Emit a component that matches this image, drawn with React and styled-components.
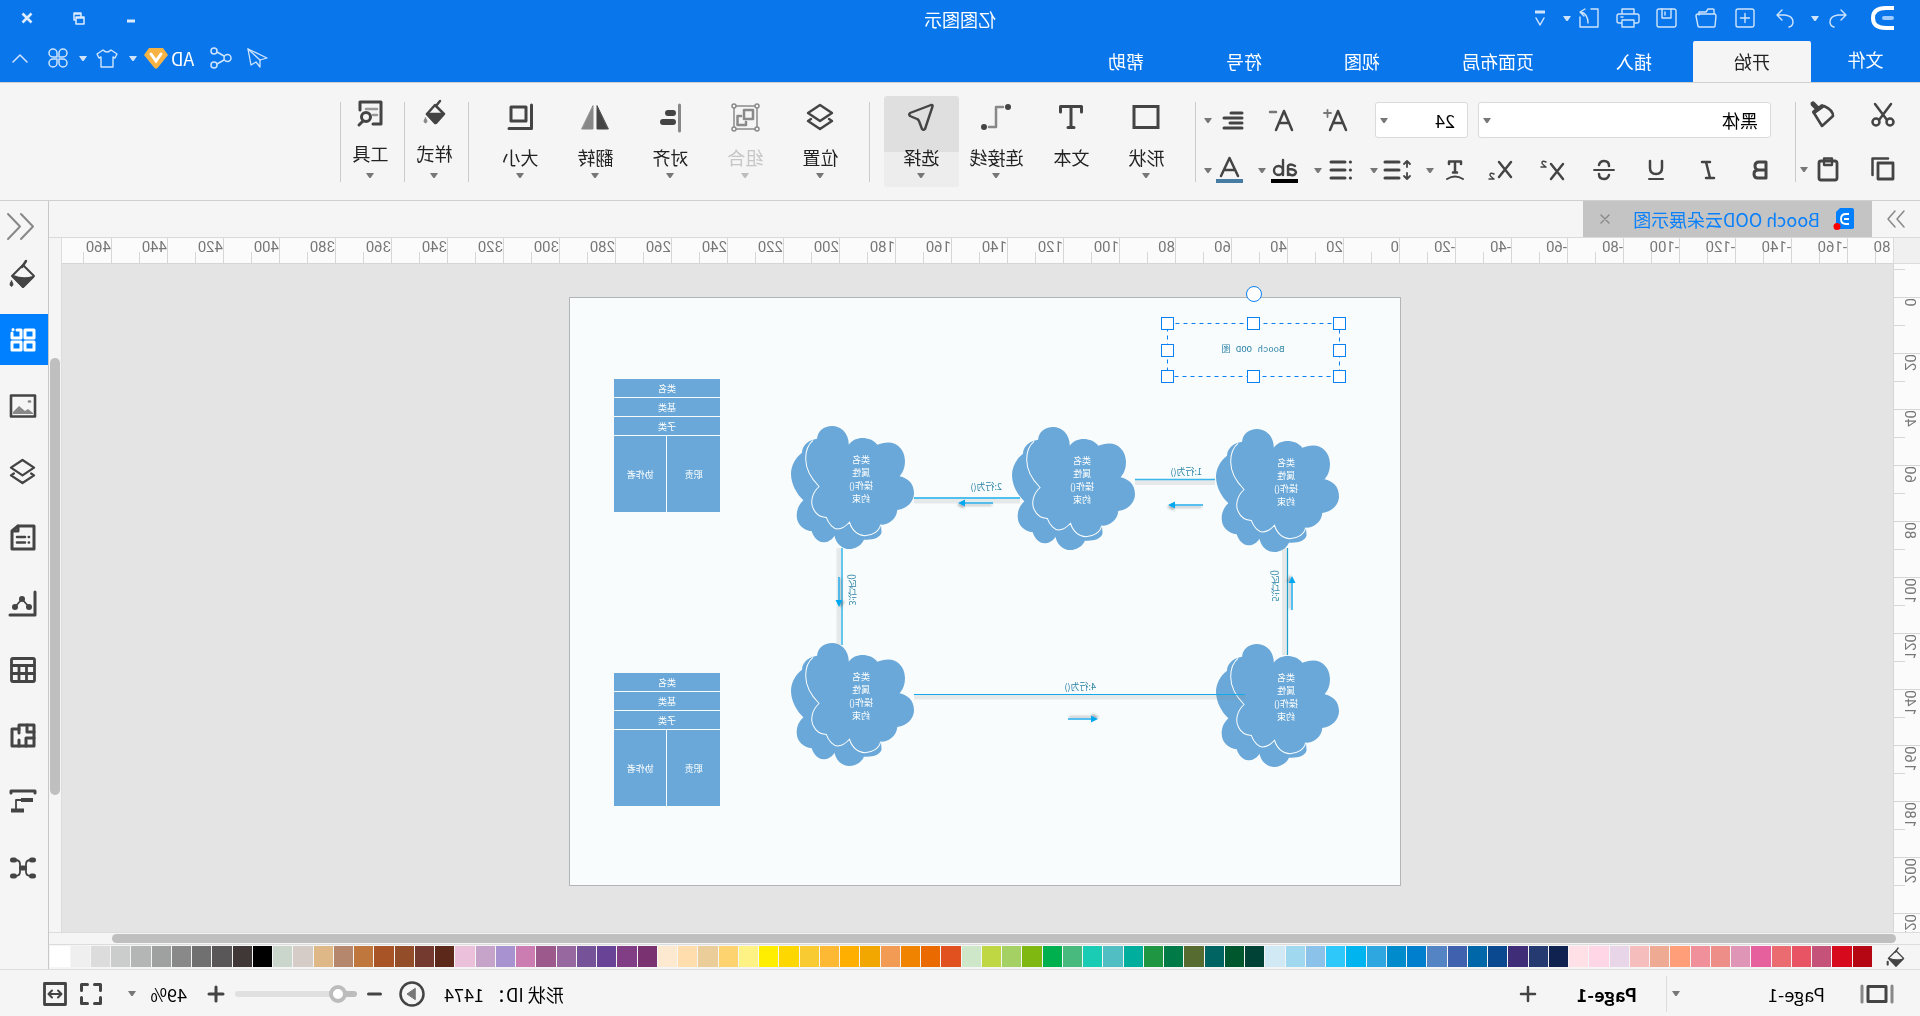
import React, { useState } from 'react';
import styled, { createGlobalStyle, css } from 'styled-components';

const FONT = '"Noto Sans CJK SC", "Noto Sans", sans-serif';
const RULER_FONT = 'Roboto, "Noto Sans", sans-serif';
const INK = '#444444';
const SHAPE = '#69a8d8';
const LINE = '#12aaec';

const GlobalStyle = createGlobalStyle`
  * { box-sizing: border-box; }
  html, body { margin: 0; padding: 0; background: #f5f5f5; }
  button, select, input { font: inherit; color: inherit; }
`;

const Shell = styled.div`
  transform: scaleX(-1);
  display: flex;
  flex-direction: column;
  height: 100vh;
  overflow: hidden;
  background: #f5f5f5;
  color: #111;
  font-family: ${FONT};
  font-size: 18px;
  font-weight: 400;
  line-height: 24px;
`;

const bare = css`
  appearance: none;
  border: 0;
  margin: 0;
  padding: 0;
  background: transparent;
  cursor: pointer;
`;

const Cell = styled.button`
  ${bare}
  display: flex;
  flex: none;
  align-items: center;
  justify-content: center;
  width: ${(p) => p.$w}px;
  height: ${(p) => p.$h || 36}px;
`;

const Svg = styled.svg`
  display: block;
  flex: none;
  overflow: visible;
`;

function Icon({ w = 24, h = w, vw = w, vh = h, sw = 2, children }) {
  return (
    <Svg
      width={w}
      height={h}
      viewBox={`0 0 ${vw} ${vh}`}
      fill="none"
      stroke="currentColor"
      strokeWidth={sw}
      strokeLinecap="round"
      strokeLinejoin="round"
      aria-hidden="true"
    >
      {children}
    </Svg>
  );
}

function Caret() {
  return (
    <Svg width="8" height="5" viewBox="0 0 8 5" fill="currentColor" aria-hidden="true">
      <path d="M0 0h8L5 4.500Q4 5.500 3 4.500Z" />
    </Svg>
  );
}

/* ---------- header ---------- */

const Header = styled.header`
  flex: none;
  background: #0977eb;
  color: #fff;
  border-bottom: 1px solid #cfcfcf;
`;

const TitleRow = styled.div`
  display: grid;
  grid-template-columns: 1fr auto 1fr;
  height: 36px;
  align-items: center;
`;

const QuickBar = styled.div`
  display: flex;
  align-items: center;
  padding-left: 25px;
  color: #cfe4fc;
`;

const Logo = styled.div`
  margin-right: 16px;
  color: #fff;
`;

const AppTitle = styled.h1`
  margin: 0;
  padding-top: 2px;
  font-size: 18px;
  font-weight: 400;
`;

const WindowButtons = styled.div`
  display: flex;
  justify-content: flex-end;
  padding-right: 1px;
  color: #dcebfd;
`;

const MenuRow = styled.div`
  display: flex;
  height: 46px;
  align-items: flex-end;
`;

const FileTab = styled.button`
  ${bare}
  width: 109px;
  height: 46px;
`;

const MenuTab = styled.button`
  ${bare}
  height: 41px;
  padding: 0 41px 1px;
  border-radius: 2px 2px 0 0;
  background: ${(p) => (p.$active ? '#f5f5f5' : 'transparent')};
  color: ${(p) => (p.$active ? '#222' : '#fff')};
`;

const MenuTools = styled.div`
  display: flex;
  align-self: flex-start;
  align-items: center;
  height: 44px;
  margin-left: auto;
  color: #cfe4fc;
`;

const Vip = styled.button`
  ${bare}
  display: flex;
  align-items: center;
  justify-content: flex-end;
  gap: 3px;
  width: 60px;
  padding-right: 2px;
  color: #fff;
`;

/* ---------- ribbon ---------- */

const Ribbon = styled.div`
  display: flex;
  flex: none;
  height: 118px;
  border-bottom: 1px solid #cfcfcf;
  color: ${INK};
`;

const Rule = styled.div`
  flex: none;
  width: 1px;
  height: 80px;
  margin-top: 19px;
  background: #cbcbcb;
`;

const ClipGroup = styled.div`
  display: grid;
  grid-template-columns: 74px 50px;
  grid-auto-rows: 54px;
  padding-top: 5px;
  align-items: center;
`;

const Pair = styled.div`
  display: flex;
  align-items: center;
  margin-right: ${(p) => p.$gap || 0}px;
  color: #777;
  & > :first-child { color: ${(p) => (p.$plain ? '#777' : INK)}; }
`;

const FontGroup = styled.div`
  display: flex;
  flex-direction: column;
  gap: 14px;
  width: 599px;
  padding: 19px 0 0 9px;
`;

const FontRow = styled.div`
  display: flex;
  align-items: center;
  height: 36px;
  padding-left: ${(p) => p.$pad || 0}px;
`;

const PickerWrap = styled.div`
  display: grid;
  align-items: center;
  width: ${(p) => p.$w}px;
  height: ${(p) => p.$h || 36}px;
  margin-right: ${(p) => p.$gap || 0}px;
  & > * { grid-area: 1 / 1; }
  & > svg { justify-self: end; margin-right: 5px; color: #777; pointer-events: none; }
`;

const Picker = styled.select`
  ${bare}
  width: 100%;
  height: 100%;
  padding: 0 20px 0 ${(p) => (p.$plain ? 32 : 12)}px;
  color: #000;
  background: ${(p) => (p.$plain ? 'transparent' : '#fff')};
  border: ${(p) => (p.$plain ? '0' : '1px solid #dadada')};
  border-radius: 3px;
`;

const ToolGroup = styled.div`
  display: flex;
  padding: 13px ${(p) => (p.$tight ? '0' : '14px')} 0 ${(p) => (p.$tight ? '0' : '11px')};
`;

const Tool = styled.button`
  ${bare}
  display: flex;
  flex-direction: column;
  align-items: center;
  justify-content: flex-start;
  width: ${(p) => (p.$small ? 63 : 75)}px;
  height: 91px;
  padding: ${(p) => (p.$small ? '3px 0 0 4px' : '7px 0 0')};
  border-radius: 3px;
  color: ${(p) => (p.$off ? '#8a8a8a' : INK)};
  background: ${(p) => (p.$on ? 'linear-gradient(#dfdfdf 56px, #ededed 56px)' : 'transparent')};
`;

const ToolIcon = styled.span`
  display: flex;
  align-items: center;
  justify-content: center;
  height: 28px;
`;

const ToolLabel = styled.span`
  margin: 14px 0 ${(p) => (p.$small ? 8 : 4)}px;
  white-space: nowrap;
  color: ${(p) => (p.$off ? '#c6c6c6' : '#222')};
`;

const ToolCaret = styled.span`
  color: ${(p) => (p.$off ? '#bdbdbd' : '#777')};
`;

/* ---------- workspace ---------- */

const Workspace = styled.div`
  display: flex;
  flex: 1;
  min-height: 0;
`;

const Editor = styled.main`
  display: flex;
  flex: 1;
  flex-direction: column;
  min-width: 0;
`;

const DocBar = styled.div`
  display: flex;
  flex: none;
  height: 37px;
  border-bottom: 1px solid #dadada;
  color: #888;
`;

const DocTab = styled.div`
  display: flex;
  align-items: center;
  width: 289px;
  padding-left: 18px;
  background: #c4c4c4;
`;

const DocName = styled.span`
  flex: 1;
  padding-left: 14px;
  color: #0a80fa;
  white-space: nowrap;
`;

const Board = styled.div`
  display: grid;
  flex: 1;
  grid-template-columns: 27px minmax(0, 1fr) 13px;
  grid-template-rows: 26px minmax(0, 1fr) 13px;
  min-height: 0;
`;

const Corner = styled.div`
  background: #f0f0f0;
  border-right: 1px solid #dcdcdc;
  border-bottom: 1px solid #dcdcdc;
`;

const TopRuler = styled.div`
  display: flex;
  overflow: hidden;
  background: #fbfbfb;
  border-bottom: 1px solid #d6d6d6;
  color: #777;
  font-family: ${RULER_FONT};
  font-size: 15px;
  line-height: 18px;
  & > :first-child { margin-left: -11px; }
`;

const TopMark = styled.span`
  position: relative;
  flex: none;
  width: 56px;
  border-left: 1px solid #d6d6d6;
  &::after {
    content: '';
    position: absolute;
    left: 27px;
    bottom: 0;
    width: 1px;
    height: 11px;
    background: #d6d6d6;
  }
`;

const SideRuler = styled.div`
  display: flex;
  flex-direction: column;
  overflow: hidden;
  background: #fbfbfb;
  border-right: 1px solid #d6d6d6;
  color: #777;
  font-family: ${RULER_FONT};
  font-size: 15px;
  line-height: 18px;
  & > :first-child { margin-top: -23px; }
`;

const SideMark = styled.span`
  position: relative;
  display: flex;
  flex: none;
  align-items: flex-start;
  height: 56px;
  padding-left: 1px;
  border-top: 1px solid #d6d6d6;
  &::after {
    content: '';
    position: absolute;
    right: 0;
    top: 27px;
    width: 11px;
    height: 1px;
    background: #d6d6d6;
  }
`;

const SideText = styled.span`
  writing-mode: vertical-rl;
  transform: rotate(180deg);
`;

const Canvas = styled.div`
  position: relative;
  overflow: hidden;
  background: #e4e4e4;
`;

const VScroll = styled.div`
  grid-row: 1 / 3;
  grid-column: 3;
  display: flex;
  border-left: 1px solid #dcdcdc;
`;

const VThumb = styled.div`
  flex: 1;
  margin: 120px 1px 137px;
  border-radius: 5px;
  background: #bfbfbf;
`;

const HScroll = styled.div`
  grid-column: 1 / -1;
  display: flex;
  border: solid #dcdcdc;
  border-width: 1px 0;
`;

const HThumb = styled.div`
  flex: 1;
  margin: 1px 63px 1px 24px;
  border-radius: 5px;
  background: #bfbfbf;
`;

const Swatches = styled.div`
  display: flex;
  flex: none;
  height: 24px;
  padding: 1px 1px 2px 0;
  color: ${INK};
`;

const SwatchList = styled.div`
  display: flex;
  flex: 1;
  gap: 1px;
`;

const Swatch = styled.button`
  ${bare}
  flex: 1;
  background: ${(p) => p.$c};
`;

const SidePanel = styled.nav`
  display: flex;
  flex: none;
  flex-direction: column;
  width: 49px;
  border-left: 1px solid #c8c8c8;
  color: ${INK};
`;

const SideList = styled.div`
  display: flex;
  flex-direction: column;
  gap: 15px;
  margin-top: 17px;
`;

const SideItem = styled.button`
  ${bare}
  display: flex;
  align-items: center;
  justify-content: center;
  height: ${(p) => p.$h || 51}px;
  padding-left: ${(p) => (p.$wide ? 6 : 2)}px;
  color: ${(p) => (p.$on ? '#fff' : INK)};
  background: ${(p) => (p.$on ? '#0080ff' : 'transparent')};
`;

/* ---------- page and diagram ---------- */

const Page = styled.div`
  position: absolute;
  left: 492px;
  top: 33px;
  width: 832px;
  height: 589px;
  background: #f8fcfd;
  border: 1px solid #b2b6b6;
  font-size: 9px;
  line-height: 13px;
  color: #2b83a6;
`;

const Links = styled.svg`
  position: absolute;
  left: 0;
  top: 0;
  overflow: visible;
`;

const CloudNode = styled.div`
  position: absolute;
  left: ${(p) => p.$x}px;
  top: ${(p) => p.$y}px;
  width: 123px;
  height: 123px;
`;

const CloudArt = styled.svg`
  position: absolute;
  inset: 0;
`;

const CloudText = styled.div`
  position: relative;
  width: 106px;
  padding-top: 27px;
  text-align: center;
  color: #fff;
`;

const ClassTable = styled.table`
  position: absolute;
  left: ${(p) => p.$x}px;
  top: ${(p) => p.$y}px;
  width: 108px;
  border-collapse: separate;
  border-spacing: 1px;
  table-layout: fixed;
  color: #fff;
  text-align: center;
`;

const ClassCell = styled.td`
  height: ${(p) => (p.$tall ? 76 : 18)}px;
  padding: 0;
  background: ${SHAPE};
`;

const LinkLabel = styled.span`
  position: absolute;
  left: ${(p) => p.$x}px;
  top: ${(p) => p.$y}px;
  white-space: nowrap;
  ${(p) => p.$up && css`
    writing-mode: vertical-rl;
    transform: rotate(180deg);
  `}
`;

const Selected = styled.div`
  position: absolute;
  left: 60px;
  top: 25px;
  width: 174px;
  height: 54px;
  display: flex;
  align-items: center;
  justify-content: center;
  font-family: "Liberation Mono", "Noto Sans CJK SC", monospace;
`;

const SelectionArt = styled.svg`
  position: absolute;
  inset: 0;
  overflow: visible;
`;

/* ---------- status bar ---------- */

const StatusBar = styled.footer`
  display: flex;
  flex: none;
  align-items: center;
  height: 47px;
  padding: 1px 37px 0 23px;
  border-top: 1px solid #dcdcdc;
  color: #000;
`;

const StatusRule = styled.div`
  width: 1px;
  height: 36px;
  background: #dcdcdc;
`;

const PageTab = styled.button`
  ${bare}
  padding: 0 28px 0 29px;
  font-weight: 700;
`;

const ShapeId = styled.span`
  margin-left: auto;
  margin-right: 13px;
`;

const Dim = styled.span`
  display: flex;
  color: ${INK};
`;

const Zoom = styled.input`
  appearance: none;
  width: 122px;
  height: 18px;
  margin: 0;
  background: transparent;
  &::-webkit-slider-runnable-track {
    height: 6px;
    border-radius: 3px;
    background: linear-gradient(to right, #bcbcbc 20px, #e0e0e0 20px);
  }
  &::-webkit-slider-thumb {
    appearance: none;
    width: 18px;
    height: 18px;
    margin-top: -6px;
    border: 4px solid #bcbcbc;
    border-radius: 50%;
    background: #fff;
  }
`;

const ZoomValue = styled.span`
  width: 44px;
  margin-left: 10px;
`;

/* ---------- data ---------- */

const MENUS = ['开始', '插入', '页面布局', '视图', '符号', '帮助'];

const COLORS = (
  'b50614 d60a1c c55278 e95464 ea6c70 e6609e df96b6 ee8e88 f0909a ff9e78 efaa94 f5bdbb e8d5e8 ffd6e6 ffe0e6 ' +
  '102250 243a70 402d78 0a4890 0068a8 4062ae 5584c4 007fcf 008bcd 2ea7e0 00b4f0 2ec8fa 8ac2ea a0d8ef d0e9f5 ' +
  '004236 00572e 006463 556b2f 007a46 1e9642 00ae9e 50bec2 1accb4 48ba7e 00b04f 80b812 a4d064 bed743 cfe7c9 ' +
  'e1501f eb6a00 f08300 f29b55 f2a700 ffaf00 fdb933 f9cb33 fed700 ffee00 fdf283 fdd370 ebcd99 ffddac fde9d0 7a3270 ' +
  '823e84 694396 765398 96689f 9c5a8c cb7cb0 a892d0 c6a4ca ebc0da 5b2819 753a2f 934d29 a85427 c0773e b5876c ' +
  'deb887 d5ccc8 cad5cc 000000 3f3837 595757 707070 898989 9fa0a0 b4b5b5 cbcdcc dcdcdc efefef ffffff'
).split(' ');

const TOP_MARKS = Array.from({ length: 33 }, (_, i) => -180 + i * 20);
const SIDE_MARKS = ['', 0, 20, 40, 60, 80, 100, 120, 140, 160, 180, 200, 220];

const CLOUDS = [[61, 131], [265, 129], [486, 128], [61, 346], [486, 345]];

/* ---------- drawings ---------- */

const bucket = (
  <Icon w={26} h={28} sw={2}>
    <path d="M10 1l4 6" strokeWidth="2.500" />
    <path d="M13 5L2 16l11 11 11-11Z" />
    <path d="M3 17q10 3 20-1L13 27Z" fill="currentColor" />
    <path d="M24.500 21q3 4 0 5.500q-3-1.500 0-5.500Z" fill="currentColor" strokeWidth="1" />
  </Icon>
);

const layers = (w, h) => (
  <Icon w={w} h={h} vw={26} vh={26} sw={2.400}>
    <path d="M13 1l12 8-12 8L1 9Z" />
    <path d="M4 15l-3 2 12 8 12-8-3-2" />
  </Icon>
);

const toolsA = [
  ['形状', <Icon w={28} h={24} sw={3}><path d="M2 1.500h24v21H2Z" strokeLinejoin="miter" /></Icon>, true],
  ['文本', <Icon w={24} h={24} sw={3}><path d="M1.500 7V1.500h21V7M12 2v20M9 22.500h6" /></Icon>, false],
  ['连接线', (
    <Icon w={30} h={24} sw={2.500}>
      <g stroke="#888"><path d="M8 2h7v20h7" /></g>
      <g fill="currentColor" stroke="none"><circle cx="3" cy="2" r="3" /><circle cx="27" cy="22" r="3" /></g>
    </Icon>
  ), true],
  ['选择', (
    <Icon w={26} h={27} sw={2.400}>
      <path d="M1.500 2.500Q1 .500 3 1l21 8q1.500 1.500 0 3l-7 3q-1.500.500-2 2l-3 8q-1.500 1.500-3 0Z" />
    </Icon>
  ), true],
];

const toolsB = [
  ['位置', layers(26, 26), true],
  ['组合', (
    <Icon w={29} h={29} sw={1.500}>
      <path d="M3 3h23v23H3Z" />
      <g strokeWidth="2.500"><path d="M7 7h9v9H7Z" /><path d="M19 13h3.500v9H14v-3" /></g>
      <g fill="#f5f5f5"><circle cx="3" cy="3" r="2" /><circle cx="26" cy="3" r="2" /><circle cx="3" cy="26" r="2" /><circle cx="26" cy="26" r="2" /></g>
    </Icon>
  ), true, true],
  ['对齐', (
    <Icon w={22} h={27} sw={6}>
      <path d="M1.500 1v26" stroke="#888" strokeWidth="3" />
      <path d="M8 9h5M8 18h10" />
    </Icon>
  ), true],
  ['翻转', (
    <Icon w={28} h={25} sw={1}>
      <path d="M12 1v23H1Z" fill="currentColor" />
      <path d="M16 1v23h11Z" fill="#888" stroke="#888" />
    </Icon>
  ), true],
  ['大小', (
    <Icon w={26} h={26} sw={3}>
      <path d="M7 3h15v14H7Z" /><path d="M1.500 1v23.500H24" />
    </Icon>
  ), true],
];

const toolsC = [
  ['样式', (
    <Icon w={24} h={26} sw={2.500}>
      <path d="M6 1l4 5" />
      <path d="M11 5L2 14l8 9 9-9Z" />
      <path d="M3 14h16l-8 9Z" fill="currentColor" />
      <path d="M20.500 18q3 4 0 5q-3-1 0-5Z" fill="#888" stroke="#888" strokeWidth="1" />
    </Icon>
  )],
  ['工具', (
    <Icon w={26} h={26} sw={3}>
      <path d="M23 10V2H2v22h8" />
      <path d="M6 9h11M6 15h4" stroke="#999" strokeWidth="2.500" />
      <circle cx="17" cy="17" r="4.500" /><path d="M20 21l4 4" />
    </Icon>
  )],
];

const sideIcons = [
  ['形状库', (
    <Icon w={26} h={26} sw={3}>
      <path d="M2 3h9v8H2ZM2 15h9v8H2ZM15 15h9v8h-9ZM15 3v8h9V6M15 3h4M23 2.500v.200" />
    </Icon>
  )],
  ['图片', (
    <Icon w={28} h={24} sw={2.600}>
      <path d="M2 1.500h24v21H2Z" />
      <path d="M4 19l5-4 3 2 6-5 6 6v2H4Z" fill="#888" stroke="none" />
      <path d="M7 7.500h1" stroke="#888" />
    </Icon>
  )],
  ['图层', layers(27, 25)],
  ['文档', (
    <Icon w={26} h={27} sw={3}>
      <path d="M2 2h16l6 5v18H2Z" /><path d="M18 2v5h5" />
      <path d="M11 13h8M11 18.500h8M7 13h.200M7 18.500h.200" strokeWidth="2.600" />
    </Icon>
  )],
  ['图表', (
    <Icon w={28} h={26} sw={3}>
      <path d="M2 1v23h25" />
      <path d="M8 16l7-8 7 8" strokeWidth="1.800" />
      <g fill="currentColor" stroke="none"><circle cx="8" cy="16" r="3" /><circle cx="15" cy="8" r="3" /><circle cx="22" cy="16" r="3" /></g>
    </Icon>
  )],
  ['表格', (
    <Icon w={26} h={26} sw={2.800}>
      <rect x="1.500" y="1.500" width="23" height="23" rx="1.500" />
      <path d="M2 8.500h22M2 16.500h22M9.500 9v15M17 9v15" />
    </Icon>
  )],
  ['平面图', (
    <Icon w={26} h={25} sw={3}>
      <path d="M2 2h15v4h7v17H2Z" /><path d="M9 2v7H2M17 6v4M2 15h8v8M17 17v6" />
    </Icon>
  )],
  ['甘特图', (
    <Icon w={28} h={25} sw={3}>
      <path d="M2 4V2h24v2" />
      <path d="M14 11h7v9" strokeWidth="1.800" />
      <path d="M4 11h12M13 21.500h13" strokeWidth="4" strokeLinecap="butt" />
    </Icon>
  )],
  ['思维导图', (
    <Icon w={28} h={24} sw={5}>
      <path d="M3.500 4h2M3.500 20h2M22.500 4h2M22.500 20h2M12.500 12h3" />
      <path d="M6 4q5 0 5 4v8q0 4-5 4M22 4q-5 0-5 4v8q0 4 5 4M11 12h6" strokeWidth="1.800" />
    </Icon>
  )],
];

function ToolButton({ label, icon, caret, off, on, small }) {
  return (
    <Tool type="button" $off={off} $on={on} $small={small} disabled={off}>
      <ToolIcon>{icon}</ToolIcon>
      <ToolLabel $off={off} $small={small}>{label}</ToolLabel>
      {caret && <ToolCaret $off={off}><Caret /></ToolCaret>}
    </Tool>
  );
}

function CaretButton({ label, w = 12 }) {
  return <Cell $w={w} type="button" aria-label={label}><Caret /></Cell>;
}

function Cloud({ x, y }) {
  return (
    <CloudNode $x={x} $y={y}>
      <CloudArt width="123" height="123" viewBox="0 0 368 368" fill={SHAPE} aria-hidden="true">
        <path d="M290 38C325 44 335 65 335 80C355 95 368 120 368 143C368 175 350 205 331 222C345 235 351 250 351 268C351 295 330 313 306 315C300 335 285 348 272 348C258 348 245 340 238 328C232 355 212 368 194 368C175 368 155 355 150 340C125 342 100 335 97 318L99 295L190 150Z" />
        <path d="M195 56C195 20 220 0 245 0C270 0 288 15 290 38C312 48 324 72 324 98C324 135 300 165 284 181C305 200 312 230 300 250C292 268 275 273 262 274C255 295 240 308 229 308C215 308 202 298 193 288C185 315 165 328 147 328C125 328 103 315 100 295C80 297 52 280 50 251C20 248 0 225 0 201C0 170 20 155 43 150C30 135 27 120 27 103C28 70 50 49 77 49C90 49 100 52 110 56C120 42 138 36 154 36C170 36 185 42 195 56Z" />
        <path d="M302 43C317 55 324 75 324 98C324 135 300 165 284 181C305 200 312 230 300 250C292 268 275 273 262 274C255 295 240 308 229 308C215 308 202 298 193 288C185 315 165 328 147 328C125 328 103 315 100 295" fill="none" stroke="#fff" strokeWidth="3" />
      </CloudArt>
      <CloudText>类名<br />属性<br />操作()<br />约束</CloudText>
    </CloudNode>
  );
}

function ClassBox({ x, y }) {
  return (
    <ClassTable $x={x} $y={y}>
      <tbody>
        <tr><ClassCell colSpan={2}>类名</ClassCell></tr>
        <tr><ClassCell colSpan={2}>基类</ClassCell></tr>
        <tr><ClassCell colSpan={2}>子类</ClassCell></tr>
        <tr><ClassCell $tall>职责</ClassCell><ClassCell $tall>协作者</ClassCell></tr>
      </tbody>
    </ClassTable>
  );
}

function Arrow({ x, y, angle, len }) {
  return (
    <g transform={`translate(${x} ${y}) rotate(${angle})`} filter="url(#soft)">
      <path d={`M0 0H${len - 6}`} stroke={LINE} strokeWidth="1.400" />
      <path d={`M${len - 7} -3.500L${len} 0L${len - 7} 3.500Z`} fill="#00a8f0" />
    </g>
  );
}

function Diagram() {
  const xs = [0, 86, 172];
  const ys = [0, 27, 53];
  return (
    <Page>
      {CLOUDS.map(([x, y]) => <Cloud key={`${x}-${y}`} x={x} y={y} />)}
      <ClassBox x={679} y={80} />
      <ClassBox x={679} y={374} />
      <Links width="830" height="587" fill="none" aria-hidden="true">
        <defs>
          <filter id="soft" x="-50%" y="-200%" width="200%" height="500%" filterUnits="objectBoundingBox">
            <feDropShadow dx="1" dy="2" stdDeviation="1.200" floodColor="#555" floodOpacity="0.450" />
          </filter>
        </defs>
        <g stroke="#8a8a8a" strokeOpacity="0.160" strokeWidth="5">
          <path d="M185 184.500H265M380 203H486M155 399H486M115.500 250V357M561 250V347" />
        </g>
        <path d="M185 181.500H265" stroke="#3ab6ec" strokeWidth="1.500" />
        <path d="M380 200H486" stroke="#52c0ee" strokeWidth="2" />
        <path d="M155 396.500H486" stroke={LINE} strokeWidth="1.200" />
        <path d="M112.500 250V357" stroke="#1a9fce" strokeWidth="1.200" />
        <path d="M558 250V347" stroke="#62c6f0" strokeWidth="2" />
        <Arrow x={197} y={207} angle={0} len={35} />
        <Arrow x={407} y={205} angle={0} len={35} />
        <Arrow x={332} y={421} angle={180} len={30} />
        <Arrow x={108} y={312} angle={-90} len={34} />
        <Arrow x={561} y={279} angle={90} len={30} />
      </Links>
      <LinkLabel $x={198} $y={167}>1:行为()</LinkLabel>
      <LinkLabel $x={398} $y={182}>2:行为()</LinkLabel>
      <LinkLabel $x={304} $y={382}>4:行为()</LinkLabel>
      <LinkLabel $x={541} $y={276} $up>3:行为()</LinkLabel>
      <LinkLabel $x={118} $y={272} $up>5:行为()</LinkLabel>
      <Selected>
        <SelectionArt width="174" height="54" fill="none" stroke="#0a80f5" aria-hidden="true">
          <rect x="0.500" y="0.500" width="172" height="53" strokeDasharray="4 4" />
          {ys.map((y) => xs.map((x) => (
            (x !== 86 || y !== 27) && <rect key={`${x}-${y}`} x={x - 5.5} y={y - 5.5} width="12" height="12" fill="#fff" />
          )))}
          <circle cx="86" cy="-29" r="7.500" fill="#fff" />
        </SelectionArt>
        <span>Booch OOD 图</span>
      </Selected>
    </Page>
  );
}

export default function App() {
  const [zoom, setZoom] = useState(10);
  const [font, setFont] = useState('黑体');
  const [size, setSize] = useState('24');
  return (
    <>
      <GlobalStyle />
      <Shell>
        <Header>
          <TitleRow>
            <QuickBar>
              <Logo>
                <Icon w={24} h={24} sw={4}>
                  <path d="M1 2h8q13 0 13 10t-13 10H1" strokeLinecap="butt" />
                  <path d="M3 12h8" stroke="#9ccaff" />
                </Icon>
              </Logo>
              <Cell $w={34} type="button" aria-label="撤销">
                <Icon w={18} h={19} sw={1.400}><path d="M6 1L1 6l5 5M1 6h8q8 1 8 7 0 4-4 5" /></Icon>
              </Cell>
              <CaretButton label="撤销列表" />
              <Cell $w={48} type="button" aria-label="重做">
                <Icon w={18} h={19} sw={1.400}><path d="M12 1l5 5-5 5M17 6H9Q1 7 1 13q0 4 4 5" /></Icon>
              </Cell>
              <Cell $w={32} type="button" aria-label="新建">
                <Icon w={20} h={20} sw={1.400}><rect x="1" y="1" width="18" height="18" rx="2" /><path d="M10 5.500v9M5.500 10h9" /></Icon>
              </Cell>
              <Cell $w={46} type="button" aria-label="打开">
                <Icon w={22} h={20} sw={1.400}><path d="M3 6V2q0-1 1-1h5l2 3h7v3M2 6h17q2 0 2 2l-2 10q0 1-1 1H3q-1 0-1-1L1 8q0-1 1-2Z" /></Icon>
              </Cell>
              <Cell $w={32} type="button" aria-label="保存">
                <Icon w={21} h={20} sw={1.400}><rect x="1" y="1" width="19" height="18" rx="2" /><path d="M6 1v9h9V1M12 4v3" /></Icon>
              </Cell>
              <Cell $w={46} type="button" aria-label="打印">
                <Icon w={24} h={20} sw={1.400}><path d="M6 6V1h12v5M5 15H3q-2 0-2-2V8q0-2 2-2h18q2 0 2 2v5q0 2-2 2h-2M6 12h12v7H6ZM17 9h2" /></Icon>
              </Cell>
              <Cell $w={32} type="button" aria-label="导出">
                <Icon w={20} h={20} sw={1.400}><path d="M8 1H1v18h18V9M14 1l5 3-4 4M18 4q-7 2-7 11" /></Icon>
              </Cell>
              <CaretButton label="导出列表" />
              <Cell $w={42} type="button" aria-label="自定义工具栏">
                <Icon w={12} h={16} sw={1.500}><path d="M1 2h10" strokeWidth="3" strokeLinecap="butt" /><path d="M2 8l4 7 4-7" /></Icon>
              </Cell>
            </QuickBar>
            <AppTitle>亿图图示</AppTitle>
            <WindowButtons>
              <Cell $w={52} type="button" aria-label="最小化"><Icon w={10} h={10} sw={3}><path d="M1 8h8" strokeLinecap="butt" /></Icon></Cell>
              <Cell $w={52} type="button" aria-label="还原"><Icon w={12} h={13} sw={1.500}><path d="M1 5h8v7H1ZM4 5V1h7v7H9M1 6h8M4 2h7" /></Icon></Cell>
              <Cell $w={52} type="button" aria-label="关闭"><Icon w={12} h={12} sw={2.600}><path d="M1.500 1.500l9 9M10.500 1.500l-9 9" strokeLinecap="butt" /></Icon></Cell>
            </WindowButtons>
          </TitleRow>
          <MenuRow>
            <FileTab type="button">文件</FileTab>
            {MENUS.map((m, i) => <MenuTab key={m} type="button" $active={i === 0}>{m}</MenuTab>)}
            <MenuTools>
              <Cell $w={36} type="button" aria-label="发送"><Icon w={21} h={20} sw={1.300}><path d="M20 1L1 10l7 2v7l4-5 5 3Z" /><path d="M20 1L8 12" /></Icon></Cell>
              <Cell $w={38} type="button" aria-label="分享"><Icon w={22} h={22} sw={1.500}><circle cx="4.500" cy="11" r="3.500" /><circle cx="18" cy="4" r="3" /><circle cx="18" cy="18" r="3" /><path d="M8 9l7-4M8 13l7 4" /></Icon></Cell>
              <Vip type="button">
                <span>AD</span>
                <Svg width="24" height="21" viewBox="0 0 24 21" aria-hidden="true">
                  <path d="M5 0h14l5 7-10.500 13q-1.500 1.500-3 0L0 7Z" fill="#f6b344" />
                  <path d="M7 6l5 7 5-7" fill="none" stroke="#fff" strokeWidth="3" strokeLinecap="round" />
                </Svg>
              </Vip>
              <CaretButton w={18} label="账户列表" />
              <Cell $w={34} type="button" aria-label="主题"><Icon w={22} h={19} sw={1.400}><path d="M7 1L1 5l2 4 2-1v10h12V8l2 1 2-4-6-4q-4 4-8 0Z" /></Icon></Cell>
              <CaretButton w={14} label="主题列表" />
              <Cell $w={36} type="button" aria-label="应用">
                <Icon w={20} h={20} sw={1.500}><path d="M9 9H5a4 4 0 1 1 4-4ZM11 9V5a4 4 0 1 1 4 4ZM9 11v4a4 4 0 1 1-4-4ZM11 11h4a4 4 0 1 1-4 4Z" /></Icon>
              </Cell>
              <Cell $w={40} type="button" aria-label="收起功能区"><Icon w={16} h={9} sw={1.500}><path d="M1 8l7-7 7 7" /></Icon></Cell>
            </MenuTools>
          </MenuRow>
        </Header>

        <Ribbon>
          <ClipGroup>
            <Cell $w={74} type="button" aria-label="剪切">
              <Icon w={24} h={24} sw={2.500}><path d="M4 1l12 16M20 1L8 17" /><circle cx="5" cy="19" r="3.500" /><circle cx="19" cy="19" r="3.500" /></Icon>
            </Cell>
            <Cell $w={46} type="button" aria-label="格式刷">
              <Icon w={24} h={24} sw={2.600}><path d="M22 1l-4 4" strokeWidth="5" /><path d="M11 3l10 7-8 13L2 13q0-6 9-10Z" /><path d="M13 3l8 6" strokeWidth="4" /></Icon>
            </Cell>
            <Cell $w={74} type="button" aria-label="复制">
              <Icon w={24} h={24} sw={2.800}><path d="M2 6h15v16H2Z" /><path d="M7 1.500h15.500V18" strokeWidth="2.500" /></Icon>
            </Cell>
            <Pair>
              <Cell $w={36} type="button" aria-label="粘贴">
                <Icon w={22} h={24} sw={2.800}><rect x="2" y="4" width="18" height="19" rx="2" /><path d="M7 4V1.500h8V4M7 4v4h8V4" strokeWidth="2.300" /></Icon>
              </Cell>
              <CaretButton label="粘贴选项" />
            </Pair>
          </ClipGroup>
          <Rule />
          <FontGroup>
            <FontRow $pad={15}>
              <PickerWrap $w={293} $gap={10}>
                <Picker aria-label="字体" value={font} onChange={(e) => setFont(e.target.value)}><option>黑体</option></Picker>
                <Caret />
              </PickerWrap>
              <PickerWrap $w={93} $gap={13}>
                <Picker aria-label="字号" value={size} onChange={(e) => setSize(e.target.value)}><option>24</option></Picker>
                <Caret />
              </PickerWrap>
              <Cell $w={54} type="button" aria-label="增大字号"><Icon w={24} h={22} sw={2.500}><path d="M1 21L9 2l8 19M4 14h10" /><path d="M16 4h7M19.500 1v7" stroke="#777" strokeWidth="1.800" /></Icon></Cell>
              <Cell $w={54} type="button" aria-label="减小字号"><Icon w={24} h={22} sw={2.500}><path d="M1 21L9 2l8 19M4 14h10" /><path d="M17 3h6" stroke="#777" /></Icon></Cell>
              <Pair>
                <Cell $w={40} type="button" aria-label="对齐方式"><Icon w={21} h={18} sw={3}><path d="M2 2h11M2 7h18M2 12h12M2 17h18" /></Icon></Cell>
                <CaretButton label="对齐选项" />
              </Pair>
            </FontRow>
            <FontRow>
              <Cell $w={52} type="button" aria-label="加粗"><Icon w={16} h={20} sw={3}><path d="M2 2h7q4 0 4 4t-4 4H2ZM2 10h8q4 0 4 4t-4 4H2Z" /></Icon></Cell>
              <Cell $w={52} type="button" aria-label="斜体"><Icon w={16} h={20} sw={2.500}><path d="M6 2h8M2 18h8M10 2L6 18" /></Icon></Cell>
              <Cell $w={52} type="button" aria-label="下划线"><Icon w={16} h={20} sw={2.500}><path d="M2 1v7q0 6 6 6t6-6V1" /><path d="M1 19h14" strokeWidth="2" /></Icon></Cell>
              <Cell $w={52} type="button" aria-label="删除线"><Icon w={22} h={20} sw={2.500}><path d="M16 5q-1-4-5-4-5 0-5 5M16 14q0 5-5 5-4 0-5-4" /><path d="M1 10h20" strokeWidth="1.800" /></Icon></Cell>
              <Cell $w={52} type="button" aria-label="上标"><Icon w={24} h={20} sw={2.500}><path d="M1 4l12 15M13 4L1 19" /><path d="M18 2q4-2 4 1 0 1-4 4h5" strokeWidth="1.500" /></Icon></Cell>
              <Cell $w={52} type="button" aria-label="下标"><Icon w={24} h={20} sw={2.500}><path d="M1 2l12 15M13 2L1 17" /><path d="M18 14q4-2 4 1 0 1-4 4h5" strokeWidth="1.500" /></Icon></Cell>
              <Pair $gap={10}>
                <Cell $w={38} type="button" aria-label="文字方向"><Icon w={18} h={20} sw={2.500}><path d="M3 4V1.500h12V4M9 2v10M7 12.500h4" /><path d="M1 19q8-5 16 0" strokeWidth="2" /></Icon></Cell>
                <CaretButton label="文字方向选项" />
              </Pair>
              <Pair $gap={10}>
                <Cell $w={34} type="button" aria-label="行距"><Icon w={28} h={20} sw={3}><path d="M12 2h14M12 10h14M12 18h14" /><path d="M4 1v6M4 13v6M1 4l3-3 3 3M1 16l3 3 3-3" strokeWidth="1.800" /></Icon></Cell>
                <CaretButton label="行距选项" />
              </Pair>
              <Pair $gap={10}>
                <Cell $w={34} type="button" aria-label="项目符号"><Icon w={22} h={20} sw={3}><path d="M7 2h14M7 10h14M7 18h14M1.500 2h.200M1.500 10h.200M1.500 18h.200" /></Icon></Cell>
                <CaretButton label="项目符号选项" />
              </Pair>
              <Pair $gap={10}>
                <Cell $w={34} type="button" aria-label="突出显示">
                  <Icon w={27} h={26} sw={2.400}><path d="M3 9q5-3 7 0v9M10 12q-8 0-8 3.500Q3 19 7 18q3-1 3-3M15 3v15" /><circle cx="19.500" cy="13.500" r="4.500" /><path d="M0 24h27" stroke="#000" strokeWidth="4" strokeLinecap="butt" /></Icon>
                </Cell>
                <CaretButton label="突出显示颜色" />
              </Pair>
              <Pair>
                <Cell $w={32} type="button" aria-label="字体颜色">
                  <Icon w={27} h={26} sw={2.500}><path d="M5 19L13.500 1 22 19M8 13h11" /><path d="M0 24h27" stroke="#467ba4" strokeWidth="4" strokeLinecap="butt" /></Icon>
                </Cell>
                <CaretButton label="更多字体颜色" />
              </Pair>
            </FontRow>
          </FontGroup>
          <Rule />
          <ToolGroup>
            {toolsA.map(([label, icon, caret]) => <ToolButton key={label} label={label} icon={icon} caret={caret} on={label === '选择'} />)}
          </ToolGroup>
          <Rule />
          <ToolGroup>
            {toolsB.map(([label, icon, caret, off]) => <ToolButton key={label} label={label} icon={icon} caret={caret} off={off} />)}
          </ToolGroup>
          {toolsC.map(([label, icon]) => (
            <React.Fragment key={label}>
              <Rule />
              <ToolGroup $tight><ToolButton label={label} icon={icon} caret small /></ToolGroup>
            </React.Fragment>
          ))}
          <Rule />
        </Ribbon>

        <Workspace>
          <Editor>
            <DocBar>
              <Cell $w={48} type="button" aria-label="展开"><Icon w={18} h={18} sw={1.500}><path d="M1 1l7 8-7 8M10 1l7 8-7 8" /></Icon></Cell>
              <DocTab>
                <Svg width="20" height="22" viewBox="0 0 20 22" aria-hidden="true">
                  <path d="M2 0h12l4 4v17H2Q1 21 0 20V2Q0 0 2 0Z" fill="#0080ff" />
                  <path d="M5 6h3q5 0 5 5t-5 5H5M5 11h5" fill="none" stroke="#fff" strokeWidth="1.800" />
                  <circle cx="17" cy="18.500" r="3.500" fill="#f00" />
                </Svg>
                <DocName>Booch OOD云朵展示图</DocName>
                <Cell $w={44} type="button" aria-label="关闭文档"><Icon w={10} h={10} sw={1.400}><path d="M1 1l8 8M9 1L1 9" /></Icon></Cell>
              </DocTab>
            </DocBar>
            <Board>
              <Corner />
              <TopRuler>{TOP_MARKS.map((m) => <TopMark key={m}>{m}</TopMark>)}</TopRuler>
              <VScroll><VThumb /></VScroll>
              <SideRuler>{SIDE_MARKS.map((m) => <SideMark key={m}><SideText>{m}</SideText></SideMark>)}</SideRuler>
              <Canvas><Diagram /></Canvas>
              <HScroll><HThumb /></HScroll>
            </Board>
            <Swatches>
              <Cell $w={48} $h={22} type="button" aria-label="填充颜色">
                <Icon w={18} h={20} vw={26} vh={28} sw={2}>
                  <path d="M10 1l4 6" /><path d="M13 5L2 16l11 11 11-11Z" /><path d="M3 17q10 3 20-1L13 27Z" fill="currentColor" /><path d="M25 21v4" strokeWidth="3" />
                </Icon>
              </Cell>
              <SwatchList>{COLORS.map((c) => <Swatch key={c} type="button" $c={`#${c}`} aria-label={`#${c}`} />)}</SwatchList>
            </Swatches>
          </Editor>
          <SidePanel aria-label="面板">
            <SideItem $h={50} $wide type="button" aria-label="收起面板"><Icon w={27} h={27} sw={2}><g stroke="#888"><path d="M13 1L1 13.500 13 26M26 1L14 13.500 26 26" /></g></Icon></SideItem>
            <SideItem $h={46} type="button" aria-label="填充">{bucket}</SideItem>
            <SideList>
              {sideIcons.map(([label, icon], i) => <SideItem key={label} type="button" $on={i === 0} aria-label={label}>{icon}</SideItem>)}
            </SideList>
          </SidePanel>
        </Workspace>

        <StatusBar>
          <Dim>
            <Cell $w={40} type="button" aria-label="页面面板"><Icon w={34} h={18} sw={3}><path d="M8 1.500h18v15H8Z" /><path d="M2 1v16M32 1v16" stroke="#888" /></Icon></Cell>
          </Dim>
          <PickerWrap $w={190} $h={34}>
            <Picker $plain aria-label="页面" defaultValue="Page-1"><option>Page-1</option></Picker>
            <Caret />
          </PickerWrap>
          <StatusRule />
          <PageTab type="button">Page-1</PageTab>
          <Dim><Cell $w={42} type="button" aria-label="添加页面"><Icon w={16} h={16} sw={2.500}><path d="M8 1v14M1 8h14" /></Icon></Cell></Dim>
          <ShapeId>形状 ID： 1474</ShapeId>
          <Dim>
            <Cell $w={38} type="button" aria-label="演示"><Icon w={26} h={26} sw={2.500}><circle cx="13" cy="13" r="11.500" /><path d="M10 7.500l8 5.500-8 5.500Z" fill="#777" stroke="#777" strokeWidth="1" /></Icon></Cell>
            <Cell $w={36} type="button" aria-label="缩小"><Icon w={15} h={4} sw={3}><path d="M1.500 2h12" /></Icon></Cell>
          </Dim>
          <Zoom type="range" aria-label="缩放" min="0" max="100" value={zoom} onChange={(e) => setZoom(Number(e.target.value))} />
          <Dim><Cell $w={38} type="button" aria-label="放大"><Icon w={16} h={16} sw={3}><path d="M8 1v14M1 8h14" /></Icon></Cell></Dim>
          <ZoomValue>49%</ZoomValue>
          <Pair $plain $gap={12}><CaretButton w={22} label="缩放比例" /></Pair>
          <Dim>
            <Cell $w={36} type="button" aria-label="全屏"><Icon w={22} h={22} sw={3}><path d="M1.500 7.500v-6h6M14.500 1.500h6v6M20.500 14.500v6h-6M7.500 20.500h-6v-6" /></Icon></Cell>
            <Cell $w={36} type="button" aria-label="适应宽度"><Icon w={24} h={24} sw={2.800}><path d="M1.500 1.500h21v21h-21Z" /><path d="M6 12h12M9 8.500L5.500 12 9 15.500M15 8.500l3.500 3.500-3.500 3.500" strokeWidth="2" /></Icon></Cell>
          </Dim>
        </StatusBar>
      </Shell>
    </>
  );
}
